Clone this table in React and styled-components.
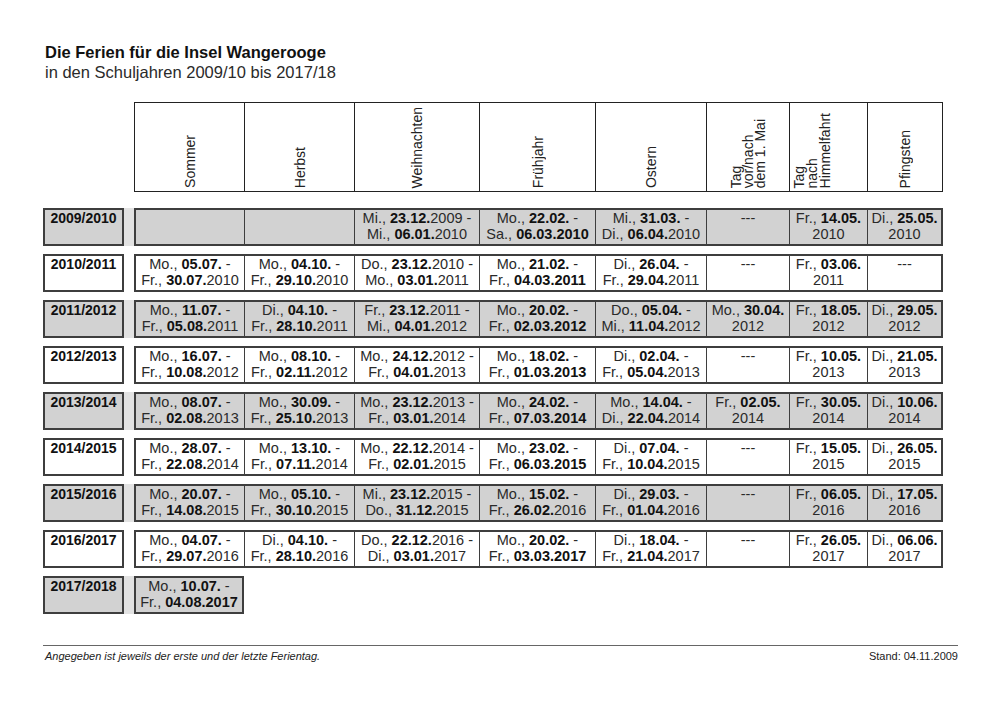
import React from 'react';
import styled, { createGlobalStyle } from 'styled-components';

const GlobalStyle = createGlobalStyle`
  html, body {
    margin: 0;
    padding: 0;
    background: #ffffff;
  }
  body {
    font-family: "Liberation Sans", Arial, sans-serif;
    color: #1e1e1e;
  }
`;

// column borders of the holiday table, in page pixels
const EDGES = [134, 244, 354, 479, 595, 706, 789, 867, 943];
const WIDTHS = EDGES.slice(1).map((e, i) => e - EDGES[i]);

const columns = (count, border) =>
  WIDTHS.slice(0, count)
    .map((w, i) => {
      let v = w;
      if (i === 0) v -= border;
      if (i === count - 1) v -= border;
      return `${v}px`;
    })
    .join(' ');

const Page = styled.div`
  width: 915px;
  padding: 42px 0 0 43px;
`;

const Title = styled.h1`
  margin: 0 0 0 2px;
  font-size: 16.5px;
  line-height: 20px;
  font-weight: 700;
  color: #111;
`;

const Subtitle = styled.div`
  margin-left: 2px;
  font-size: 16.5px;
  line-height: 21px;
  color: #2a2a2a;
`;

const Header = styled.div`
  margin: 19px 0 0 91px;
  display: grid;
  grid-template-columns: ${columns(8, 1)};
  width: 809px;
  height: 90px;
  box-sizing: border-box;
  border: 1px solid #222;
`;

const HeadCell = styled.div`
  display: flex;
  align-items: flex-end;
  justify-content: ${p => (p.$start ? 'flex-start' : 'center')};
  padding: 0 0 3px ${p => (p.$start ? 3 : 0)}px;
  border-left: ${p => (p.$first ? 'none' : '1px solid #222')};
`;

const HeadLabel = styled.div`
  writing-mode: vertical-rl;
  transform: rotate(180deg);
  white-space: nowrap;
  font-size: 14px;
  line-height: ${p => p.$lh || 16}px;
  color: #222;
`;

const Rows = styled.div`
  margin-top: 16px;
  display: flex;
  flex-direction: column;
  gap: 8px;
`;

const Row = styled.div`
  display: flex;
  height: 38px;
`;

const YearCell = styled.div`
  width: 81px;
  box-sizing: border-box;
  border: 2px solid #3e3e3e;
  background: ${p => (p.$shade ? '#d2d2d2' : '#fff')};
  text-align: center;
  font-size: 14px;
  font-weight: 700;
  line-height: 16px;
  color: #111;
`;

const Gap = styled.div`
  width: 10px;
  background: ${p => (p.$shade ? '#e2e2e2' : '#fff')};
`;

const DataRow = styled.div`
  display: grid;
  grid-template-columns: ${p => columns(p.$count, 2)};
  box-sizing: border-box;
  border: 2px solid #3e3e3e;
  background: ${p => (p.$shade ? '#d2d2d2' : '#fff')};
`;

const Cell = styled.div`
  border-left: ${p => (p.$first ? 'none' : '1px solid #3e3e3e')};
  text-align: center;
  white-space: nowrap;
  font-size: 14.5px;
  line-height: 16px;
  color: #2a2a2a;

  b {
    color: #111;
  }
`;

const Footer = styled.div`
  margin-top: 31px;
  border-top: 1px solid #666;
  display: flex;
  justify-content: space-between;
  padding: 3px 0 0 2px;
  font-size: 11px;
  line-height: 14px;
  color: #222;
`;

const Note = styled.span`
  font-style: italic;
`;

const heads = [
  { label: ['Sommer'] },
  { label: ['Herbst'] },
  { label: ['Weihnachten'] },
  { label: ['Frühjahr'] },
  { label: ['Ostern'] },
  { label: ['Tag', 'vor/nach', 'dem 1. Mai'], lh: 12 },
  { label: ['Tag', 'nach', 'Himmelfahrt'], lh: 13, start: true },
  { label: ['Pfingsten'] },
];

// *...* marks the bold part of a date
const rows = [
  {
    year: '2009/2010', shade: true, cells: [
      [], [],
      ['Mi., *23.12.*2009 -', 'Mi., *06.01.*2010'],
      ['Mo., *22.02.* -', 'Sa., *06.03.2010*'],
      ['Mi., *31.03.* -', 'Di., *06.04.*2010'],
      ['---'],
      ['Fr., *14.05.*', '2010'],
      ['Di., *25.05.*', '2010'],
    ],
  },
  {
    year: '2010/2011', cells: [
      ['Mo., *05.07.* -', 'Fr., *30.07.*2010'],
      ['Mo., *04.10.* -', 'Fr., *29.10.*2010'],
      ['Do., *23.12.*2010 -', 'Mo., *03.01.*2011'],
      ['Mo., *21.02.* -', 'Fr., *04.03.2011*'],
      ['Di., *26.04.* -', 'Fr., *29.04.*2011'],
      ['---'],
      ['Fr., *03.06.*', '2011'],
      ['---'],
    ],
  },
  {
    year: '2011/2012', shade: true, cells: [
      ['Mo., *11.07.* -', 'Fr., *05.08.*2011'],
      ['Di., *04.10.* -', 'Fr., *28.10.*2011'],
      ['Fr., *23.12.*2011 -', 'Mi., *04.01.*2012'],
      ['Mo., *20.02.* -', 'Fr., *02.03.2012*'],
      ['Do., *05.04.* -', 'Mi., *11.04.*2012'],
      ['Mo., *30.04.*', '2012'],
      ['Fr., *18.05.*', '2012'],
      ['Di., *29.05.*', '2012'],
    ],
  },
  {
    year: '2012/2013', cells: [
      ['Mo., *16.07.* -', 'Fr., *10.08.*2012'],
      ['Mo., *08.10.* -', 'Fr., *02.11.*2012'],
      ['Mo., *24.12.*2012 -', 'Fr., *04.01.*2013'],
      ['Mo., *18.02.* -', 'Fr., *01.03.2013*'],
      ['Di., *02.04.* -', 'Fr., *05.04.*2013'],
      ['---'],
      ['Fr., *10.05.*', '2013'],
      ['Di., *21.05.*', '2013'],
    ],
  },
  {
    year: '2013/2014', shade: true, cells: [
      ['Mo., *08.07.* -', 'Fr., *02.08.*2013'],
      ['Mo., *30.09.* -', 'Fr., *25.10.*2013'],
      ['Mo., *23.12.*2013 -', 'Fr., *03.01.*2014'],
      ['Mo., *24.02.* -', 'Fr., *07.03.2014*'],
      ['Mo., *14.04.* -', 'Di., *22.04.*2014'],
      ['Fr., *02.05.*', '2014'],
      ['Fr., *30.05.*', '2014'],
      ['Di., *10.06.*', '2014'],
    ],
  },
  {
    year: '2014/2015', cells: [
      ['Mo., *28.07.* -', 'Fr., *22.08.*2014'],
      ['Mo., *13.10.* -', 'Fr., *07.11.*2014'],
      ['Mo., *22.12.*2014 -', 'Fr., *02.01.*2015'],
      ['Mo., *23.02.* -', 'Fr., *06.03.2015*'],
      ['Di., *07.04.* -', 'Fr., *10.04.*2015'],
      ['---'],
      ['Fr., *15.05.*', '2015'],
      ['Di., *26.05.*', '2015'],
    ],
  },
  {
    year: '2015/2016', shade: true, cells: [
      ['Mo., *20.07.* -', 'Fr., *14.08.*2015'],
      ['Mo., *05.10.* -', 'Fr., *30.10.*2015'],
      ['Mi., *23.12.*2015 -', 'Do., *31.12.*2015'],
      ['Mo., *15.02.* -', 'Fr., *26.02.*2016'],
      ['Di., *29.03.* -', 'Fr., *01.04.*2016'],
      ['---'],
      ['Fr., *06.05.*', '2016'],
      ['Di., *17.05.*', '2016'],
    ],
  },
  {
    year: '2016/2017', cells: [
      ['Mo., *04.07.* -', 'Fr., *29.07.*2016'],
      ['Di., *04.10.* -', 'Fr., *28.10.*2016'],
      ['Do., *22.12.*2016 -', 'Di., *03.01.*2017'],
      ['Mo., *20.02.* -', 'Fr., *03.03.2017*'],
      ['Di., *18.04.* -', 'Fr., *21.04.*2017'],
      ['---'],
      ['Fr., *26.05.*', '2017'],
      ['Di., *06.06.*', '2017'],
    ],
  },
  {
    year: '2017/2018', shade: true, cells: [
      ['Mo., *10.07.* -', 'Fr., *04.08.2017*'],
    ],
  },
];

const Marked = ({ text }) =>
  text.split('*').map((part, i) => (i % 2 ? <b key={i}>{part}</b> : <React.Fragment key={i}>{part}</React.Fragment>));

const App = () => (
  <>
    <GlobalStyle />
    <Page>
      <Title>Die Ferien für die Insel Wangerooge</Title>
      <Subtitle>in den Schuljahren 2009/10 bis 2017/18</Subtitle>

      <Header>
        {heads.map((h, i) => (
          <HeadCell key={i} $first={i === 0} $start={h.start}>
            <HeadLabel $lh={h.lh}>
              {h.label.map((line, j) => (
                <React.Fragment key={j}>
                  {j > 0 && <br />}
                  {line}
                </React.Fragment>
              ))}
            </HeadLabel>
          </HeadCell>
        ))}
      </Header>

      <Rows>
        {rows.map(r => (
          <Row key={r.year}>
            <YearCell $shade={r.shade}>{r.year}</YearCell>
            <Gap $shade={r.shade} />
            <DataRow $shade={r.shade} $count={r.cells.length}>
              {r.cells.map((lines, i) => (
                <Cell key={i} $first={i === 0}>
                  {lines.map((l, j) => (
                    <div key={j}><Marked text={l} /></div>
                  ))}
                </Cell>
              ))}
            </DataRow>
          </Row>
        ))}
      </Rows>

      <Footer>
        <Note>Angegeben ist jeweils der erste und der letzte Ferientag.</Note>
        <span>Stand: 04.11.2009</span>
      </Footer>
    </Page>
  </>
);

export default App;
